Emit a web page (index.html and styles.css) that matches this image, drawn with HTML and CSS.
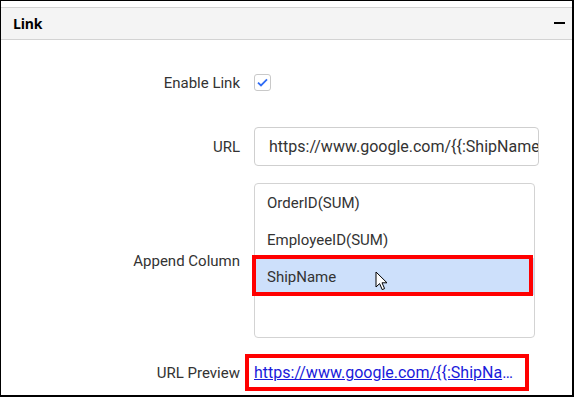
FILE: index.html
```html
<!DOCTYPE html>
<html>
<head>
<meta charset="utf-8">
<link rel="stylesheet" href="styles.css">
</head>
<body>
<div class="frame">
  <div class="panel">
    <div class="header">
      <span class="title">Link</span>
      <span class="collapse"></span>
    </div>
    <div class="content">
      <div class="row row-enable">
        <div class="label">Enable Link</div>
        <div class="checkbox">
          <svg width="11" height="9" viewBox="0 0 11 9"><path d="M1 4.6 L4 7.4 L10 1.4" fill="none" stroke="#2f6cf5" stroke-width="1.8"/></svg>
        </div>
      </div>
      <div class="row row-url">
        <div class="label">URL</div>
        <div class="input">https://www.google.com/{{:ShipName}}</div>
      </div>
      <div class="row row-append">
        <div class="label">Append Column</div>
        <div class="listbox">
          <div class="item">OrderID(SUM)</div>
          <div class="item">EmployeeID(SUM)</div>
          <div class="item selected">ShipName
            <span class="annot annot-item"></span>
            <svg class="cursor" width="13" height="20" viewBox="0 0 13 20"><path d="M1 1 L1 16 L4.6 12.6 L7.2 18.6 L9.6 17.6 L7 11.8 L12 11.8 Z" fill="#fff" stroke="#000" stroke-width="1" stroke-linejoin="round"/></svg>
          </div>
        </div>
      </div>
      <div class="row row-preview">
        <div class="label">URL Preview</div>
        <div class="preview">
          <a class="link" href="#">https://www.google.com/{{:ShipName}}</a>
          <span class="annot annot-preview"></span>
        </div>
      </div>
    </div>
  </div>
</div>
</body>
</html>
```
FILE: styles.css
```css
html, body {
  margin: 0;
  padding: 0;
  background: #fff;
}
.frame {
  width: 574px;
  height: 397px;
  box-sizing: border-box;
  border-top: 1px solid #000;
  border-left: 1px solid #000;
  border-right: 2px solid #000;
  border-bottom: 2px solid #000;
  padding-top: 6px;
  font-family: Roboto, "Liberation Sans", sans-serif;
  color: #333;
  overflow: hidden;
}
.panel {
  border-top: 1px solid #d3d3d3;
}
.header {
  height: 31px;
  background: #f4f4f4;
  border-bottom: 1px solid #d3d3d3;
  display: flex;
  align-items: center;
  justify-content: space-between;
  padding: 0 7px 0 12px;
}
.title {
  font-family: "Open Sans", "Noto Sans", sans-serif;
  font-weight: 700;
  font-size: 14px;
  color: #000;
  letter-spacing: -0.2px;
}
.collapse {
  width: 11px;
  height: 2px;
  background: #000;
  margin-top: -1px;
}
.content {
  display: flex;
  flex-direction: column;
}
.row {
  display: flex;
  align-items: center;
  column-gap: 14px;
}
.label {
  width: 239px;
  text-align: right;
  font-size: 15px;
  color: #333;
}
.row-enable { margin-top: 34px; height: 17px; }
.row-url { margin-top: 36px; }
.row-append { margin-top: 17px; }
.row-preview { margin-top: 16px; height: 37px; }
.checkbox {
  width: 17px;
  height: 17px;
  box-sizing: border-box;
  border: 1px solid #c9c9c9;
  border-radius: 3px;
  display: flex;
  align-items: center;
  justify-content: center;
}
.input {
  width: 285px;
  height: 39px;
  box-sizing: border-box;
  border: 1px solid #cfcfcf;
  border-radius: 4px;
  padding-left: 14px;
  display: flex;
  align-items: center;
  font-size: 16px;
  color: #333;
  white-space: nowrap;
  overflow: hidden;
}
.listbox {
  width: 281px;
  height: 155px;
  box-sizing: border-box;
  border: 1px solid #d3d3d3;
  border-radius: 4px;
}
.item {
  position: relative;
  height: 37px;
  display: flex;
  align-items: center;
  padding-left: 12px;
  font-size: 15px;
  color: #333;
}
.item.selected {
  background: #cde0fb;
}
.annot {
  position: absolute;
  border: 4px solid #ff0000;
  box-sizing: border-box;
  pointer-events: none;
}
.annot-item {
  left: -3px;
  right: 1px;
  top: -3px;
  bottom: -1px;
}
.cursor {
  position: absolute;
  left: 120px;
  top: 13px;
}
.preview {
  position: relative;
  height: 37px;
  width: 263px;
  display: flex;
  align-items: center;
}
.link {
  display: block;
  width: 263px;
  white-space: nowrap;
  overflow: hidden;
  text-overflow: ellipsis;
  font-size: 16px;
  color: #1a1adb;
  text-decoration: underline;
}
.annot-preview {
  left: -9px;
  top: 0;
  width: 284px;
  height: 37px;
}
```
